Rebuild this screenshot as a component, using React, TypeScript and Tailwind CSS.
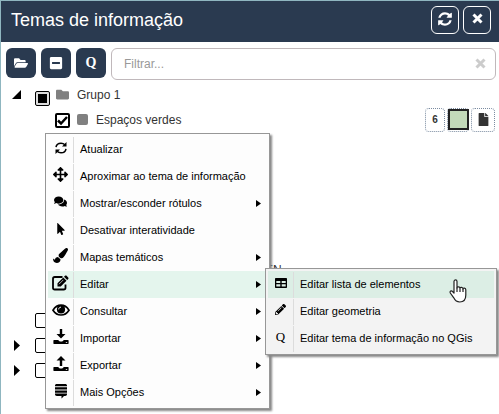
import type { ReactNode } from "react";
import {
  FaArrowsAlt,
  FaComments,
  FaFile,
  FaFolder,
  FaFolderOpen,
  FaMinusSquare,
  FaMousePointer,
  FaPaintBrush,
  FaPencilAlt,
} from "react-icons/fa";

const REFRESH =
  "M1639 1056q0 5-1 7-64 268-268 434.5t-478 166.5q-146 0-282.5-55t-243.5-157l-129 129q-19 19-45 19t-45-19-19-45v-448q0-26 19-45t45-19h448q26 0 45 19t19 45-19 45l-137 137q71 66 161 102t187 36q134 0 250-65t186-179q11-17 53-117 8-23 30-23h192q13 0 22.5 9.5t9.5 22.5zm25-800v448q0 26-19 45t-45 19h-448q-26 0-45-19t-19-45 19-45l138-138q-148-137-349-137-134 0-250 65t-186 179q-11 17-53 117-8 23-30 23h-199q-13 0-22.5-9.5t-9.5-22.5v-7q65-268 270-434.5t480-166.5q146 0 284 55.5t245 156.5l130-129q19-19 45-19t45 19 19 45z";

function RefreshIcon() {
  return (
    <svg viewBox="0 0 1792 1792" className="size-4" fill="currentColor" aria-hidden="true">
      <path d={REFRESH} />
    </svg>
  );
}

function CloseIcon() {
  return (
    <svg viewBox="0 0 11 11" className="size-[11px]" fill="none" stroke="currentColor" strokeWidth="3" aria-hidden="true">
      <path d="M1.500 1.500l8 8M9.500 1.500l-8 8" />
    </svg>
  );
}

function SyncIcon() {
  return (
    <svg viewBox="0 0 14 14" className="size-3.5" fill="none" stroke="currentColor" strokeWidth="1.5" aria-hidden="true">
      <path d="M2 6.2C2.4 3.6 4.4 2.2 7 2.2c1.700 0 2.900.6 3.900 1.600M12 7.800c-.4 2.600-2.400 4-5 4-1.700 0-2.900-.6-3.900-1.600" />
      <path d="M12.500 1v4.500H8zM1.500 13V8.500H6z" fill="currentColor" stroke="none" />
    </svg>
  );
}

function EditIcon() {
  return (
    <svg viewBox="0 0 17 16" className="h-4 w-[17px]" fill="none" stroke="currentColor" aria-hidden="true">
      <path d="M10.500 2H2.800C1.700 2 1 2.700 1 3.800v8.900c0 1.100.7 1.800 1.800 1.800h8.900c1.100 0 1.800-.7 1.800-1.800V9.500" strokeWidth="1.800" />
      <path d="M5.500 11.500V8.300l5.800-5.800 3.200 3.200-5.800 5.800zM12 1.800l1-1c.5-.5 1.100-.5 1.600 0l1.600 1.600c.5.5.5 1.100 0 1.600l-1 1z" fill="currentColor" stroke="none" />
      <path d="M7 9.200l4.300-4.300" stroke="white" strokeWidth=".7" />
    </svg>
  );
}

function EyeIcon() {
  return (
    <svg viewBox="0 0 18 12" className="h-3 w-[18px]" fill="none" stroke="currentColor" aria-hidden="true">
      <path d="M1 6.200C3 3 5.800 1.200 9 1.200s6 1.800 8 5C15 9.300 12.200 11 9 11S3 9.300 1 6.200z" strokeWidth="1.700" />
      <circle cx="9" cy="5.400" r="4.100" fill="currentColor" stroke="none" />
      <path d="M6.700 5.400C6.700 4 7.700 3.200 9 3.200" stroke="white" strokeWidth="1" />
    </svg>
  );
}

function TrayIcon({ up = false }: { up?: boolean }) {
  return (
    <svg viewBox="0 0 16 16" className="size-4" fill="currentColor" aria-hidden="true">
      {up ? <path d="M8 0l4.500 4.500H9.200V10H6.800V4.500H3.500z" /> : <path d="M6.800 0h2.400v5h3.300L8 9.500 3.500 5h3.300z" />}
      <path d="M1 11h4.300c.6 1 1.500 1.500 2.700 1.500s2.100-.5 2.700-1.500H15c.4 0 .6.200.6.600v3c0 .3-.2.500-.6.500H1c-.4 0-.6-.2-.6-.5v-3c0-.4.200-.6.600-.6z" />
      <path d="M12.800 13h1.400v.8h-1.400z" fill="white" />
    </svg>
  );
}

function StackIcon() {
  return (
    <svg viewBox="0 0 14 16" className="h-4 w-3.5" fill="currentColor" aria-hidden="true">
      <path d="M1 3.300V2.500C1 1.500 1.800 1 2.800 1h8.400c1 0 1.800.5 1.800 1.500v.8zM1 4.200h12v2.300H1zM1 7.400h12v2.300H1zM1 10.600h12v.7c0 1-.8 1.700-1.800 1.700H10l-2.500 2.500V13H2.800C1.800 13 1 12.300 1 11.300z" />
    </svg>
  );
}

function TableIcon() {
  return (
    <svg viewBox="0 0 12 10" className="h-2.5 w-3" fill="currentColor" aria-hidden="true">
      <path fillRule="evenodd" d="M1 0h10c.6 0 1 .4 1 1v8c0 .6-.4 1-1 1H1c-.6 0-1-.4-1-1V1c0-.6.400-1 1-1zM1.300 3v2h4V3zm5.400 0v2h4V3zM1.300 6.200v2.300h4V6.200zm5.400 0v2.300h4V6.200z" />
    </svg>
  );
}

function QIcon({ className }: { className: string }) {
  return <span className={`font-['Liberation_Serif',serif] leading-4 ${className}`}>Q</span>;
}

function Arrow({ className = "" }: { className?: string }) {
  return (
    <svg viewBox="0 0 6 10" preserveAspectRatio="none" className={`fill-current ${className}`} aria-hidden="true">
      <path d="M0 0l6 5-6 5z" />
    </svg>
  );
}

interface Entry {
  icon: ReactNode;
  label: string;
  sub?: boolean;
  active?: boolean;
}

const mainEntries: Entry[] = [
  { icon: <SyncIcon />, label: "Atualizar" },
  { icon: <FaArrowsAlt className="size-[15px]" />, label: "Aproximar ao tema de informação" },
  { icon: <FaComments className="size-[13px]" />, label: "Mostrar/esconder rótulos", sub: true },
  { icon: <FaMousePointer className="size-3" />, label: "Desativar interatividade" },
  { icon: <FaPaintBrush className="size-[15px]" />, label: "Mapas temáticos", sub: true },
  { icon: <EditIcon />, label: "Editar", sub: true, active: true },
  { icon: <EyeIcon />, label: "Consultar", sub: true },
  { icon: <TrayIcon />, label: "Importar", sub: true },
  { icon: <TrayIcon up />, label: "Exportar", sub: true },
  { icon: <StackIcon />, label: "Mais Opções", sub: true },
];

const editEntries: Entry[] = [
  { icon: <TableIcon />, label: "Editar lista de elementos", active: true },
  { icon: <FaPencilAlt className="size-[11px]" />, label: "Editar geometria" },
  { icon: <QIcon className="text-[13px]" />, label: "Editar tema de informação no QGis" },
];

function MenuItem({ entry, tone, children }: { entry: Entry; tone: string; children?: ReactNode }) {
  return (
    <li className="relative">
      <button
        type="button"
        className={`flex h-[27px] w-full items-center text-left ${entry.active ? tone : ""}`}
      >
        <span className="flex h-[26px] w-[26px] items-center justify-center border-r border-[#dcdcdc] pb-1">
          {entry.icon}
        </span>
        <span className="flex-1 pl-1.5 whitespace-nowrap">{entry.label}</span>
        {entry.sub && <Arrow className="mr-1.5 h-[7px] w-[5px]" />}
      </button>
      {children}
    </li>
  );
}

function ContextMenu() {
  return (
    <ul className="absolute top-[132px] left-[44px] w-[225px] border border-[#979797] bg-[#fdfdfd] p-0.5 text-[11px] text-black shadow-[2px_2px_2px_#888]">
      {mainEntries.map((entry) => (
        <MenuItem key={entry.label} entry={entry} tone="bg-[#e4f5ed]">
          {entry.active && (
            <ul className="absolute -top-[3px] left-[217px] w-[232px] border border-[#979797] bg-[#f3f3f3] p-0.5 shadow-[2px_2px_2px_#888]">
              {editEntries.map((item) => (
                <MenuItem key={item.label} entry={item} tone="bg-[#dceee5]" />
              ))}
            </ul>
          )}
        </MenuItem>
      ))}
    </ul>
  );
}

function Check({ label, state = "off" }: { label: string; state?: "off" | "on" | "mixed" }) {
  return (
    <span className="relative size-[15px] shrink-0">
      <input
        type="checkbox"
        aria-label={label}
        defaultChecked={state === "on"}
        className={`block size-[15px] appearance-none rounded-xs border-black ${state === "mixed" ? "border bg-[#ddd]" : state === "on" ? "border-2 bg-white" : "border bg-white"}`}
      />
      {state === "on" && (
        <svg viewBox="0 0 15 15" className="pointer-events-none absolute inset-0" fill="none" stroke="black" strokeWidth="2.500">
          <path d="M3 7.500l3 3 6-6.500" />
        </svg>
      )}
      {state === "mixed" && <span className="pointer-events-none absolute inset-[3px] bg-black" />}
    </span>
  );
}

function ToolButton({ label, children }: { label: string; children: ReactNode }) {
  return (
    <button
      type="button"
      aria-label={label}
      className="flex size-[30px] shrink-0 items-center justify-center rounded-md bg-[#2a3a50] text-white"
    >
      {children}
    </button>
  );
}

function HeaderButton({ label, children }: { label: string; children: ReactNode }) {
  return (
    <button type="button" aria-label={label} className="flex size-7 items-center justify-center rounded-md border border-white pb-0.5 text-white">
      {children}
    </button>
  );
}

function Expander() {
  return (
    <button type="button" aria-label="Expandir" className="w-[21px] text-black">
      <Arrow className="h-[11px] w-1.5" />
    </button>
  );
}

export default function App() {
  return (
    <div className="relative min-h-screen overflow-hidden border-t border-l border-[#8fb6c0] bg-white font-['Liberation_Sans',Arial,sans-serif] text-[#333]">
      <header className="flex h-[41px] items-center justify-between bg-[#2a3a50] pr-2 pb-1 pl-2.5">
        <h1 className="text-lg text-white">Temas de informação</h1>
        <div className="flex gap-1">
          <HeaderButton label="Atualizar">
            <RefreshIcon />
          </HeaderButton>
          <HeaderButton label="Fechar">
            <CloseIcon />
          </HeaderButton>
        </div>
      </header>

      <div className="flex gap-[5px] pt-1.5 pr-[3px] pl-[5px]">
        <ToolButton label="Abrir grupos">
          <FaFolderOpen className="size-3.5" />
        </ToolButton>
        <ToolButton label="Fechar grupos">
          <FaMinusSquare className="size-3.5" />
        </ToolButton>
        <ToolButton label="QGis">
          <QIcon className="text-sm font-bold" />
        </ToolButton>
        <div className="relative flex-1">
          <input
            type="text"
            aria-label="Filtrar"
            placeholder="Filtrar..."
            className="block h-8 w-full rounded-md border border-[#c0b8bb] px-3 text-xs placeholder:text-[#999]"
          />
          <button type="button" aria-label="Limpar" className="absolute top-2.5 right-2.5 text-[#ccc]">
            <CloseIcon />
          </button>
        </div>
      </div>

      <ul className="pt-[3px] text-xs">
        <li className="flex h-[25px] items-center pl-[11px]">
          <button type="button" aria-label="Recolher" className="w-[23px] pb-0.5">
            <svg viewBox="0 0 9 9" className="size-[9px] fill-black">
              <path d="M9 0v9H0z" />
            </svg>
          </button>
          <span className="pt-1.5">
            <Check label="Grupo 1" state="mixed" />
          </span>
          <span className="ml-1.5 flex items-center gap-2 pb-0.5">
            <FaFolder className="size-[13px] text-[#808080]" />
            Grupo 1
          </span>
        </li>
        <li className="flex h-[25px] items-center pr-1 pl-[54px]">
          <Check label="Espaços verdes" state="on" />
          <span className="ml-[7px] flex flex-1 items-center gap-2 pb-0.5">
            <span className="size-[11px] rounded-xs bg-[#808080]" />
            Espaços verdes
          </span>
          <span className="flex gap-0.5 pb-0.5 text-[10px] font-bold">
            <button type="button" className="h-6 w-5 rounded-sm border border-dotted border-[#7a8ba0]">
              6
            </button>
            <button type="button" aria-label="Estilo" className="flex h-6 w-[22px] items-center justify-center rounded-sm border border-dotted border-[#7a8ba0]">
              <span className="block size-[21px] shrink-0 border-2 border-[#222] bg-[#c3dab9]" />
            </button>
            <button type="button" aria-label="Documento" className="flex size-6 items-center justify-center rounded-sm border border-dotted border-[#7a8ba0]">
              <FaFile className="size-[13px]" />
            </button>
          </span>
        </li>
        <li className="mt-[125px] flex h-[25px] items-center pb-0.5 pl-[264px]">EN</li>
        <li className="mt-[25px] flex h-[25px] items-center pl-[34px]">
          <Check label="Tema" />
        </li>
        <li className="flex h-[25px] items-center pl-[13px]">
          <Expander />
          <Check label="Grupo 2" />
        </li>
        <li className="flex h-[25px] items-center pl-[13px]">
          <Expander />
          <Check label="Grupo 3" />
        </li>
      </ul>

      <ContextMenu />

      <svg viewBox="0 0 18 24" className="pointer-events-none absolute top-[278px] left-[448px] h-6 w-[18px]" fill="white" stroke="#222" strokeWidth="1.200" strokeLinejoin="round">
        <path d="M5 14V2.500C5 .4 8 .4 8 2.500V9c0-1.600 3-1.600 3 .3 0-1.500 3-1.300 3 .6 0-1.300 2.800-1.200 2.800.8V16c0 4-2 7-6 7-3.600 0-4.800-1.600-6-4.200L1.300 14c-.8-1.800 1-2.800 2.200-1.500z" />
        <path d="M8 8.500V13M11 9.500V13M14 10V13" fill="none" />
      </svg>
    </div>
  );
}
